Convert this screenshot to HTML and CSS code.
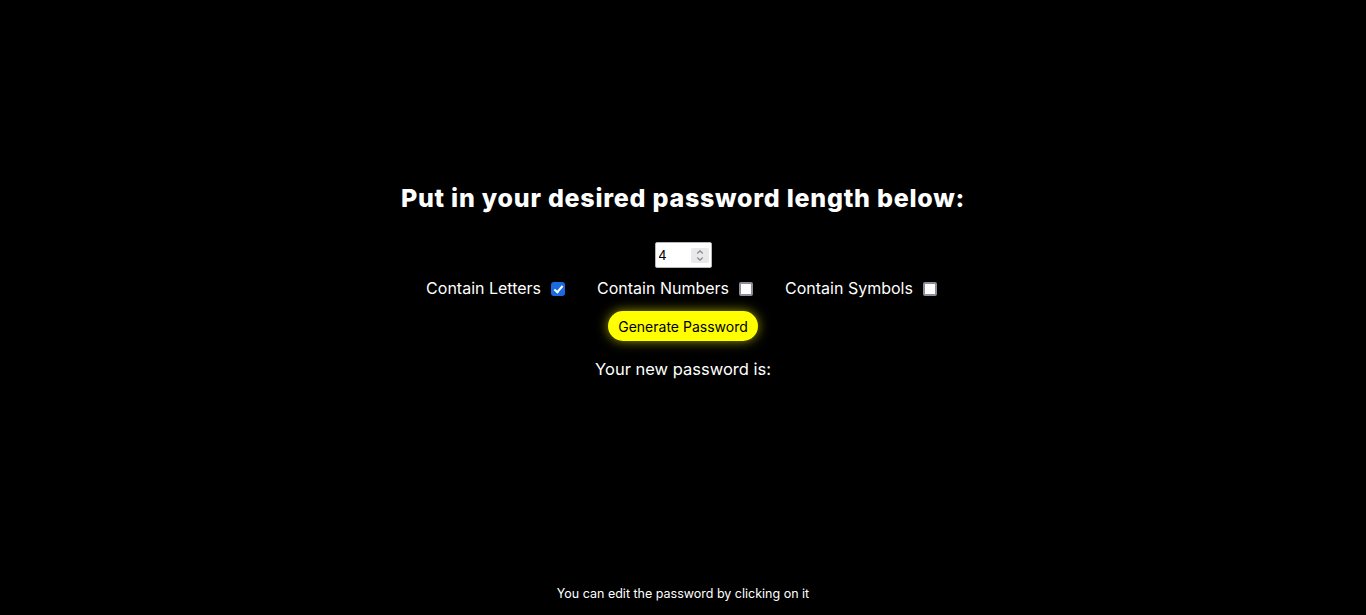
FILE: index.html
```html
<!DOCTYPE html>
<html lang="en">
<head>
<meta charset="utf-8">
<title>Password Generator</title>
<link rel="stylesheet" href="styles.css">
</head>
<body>
<main class="app">
  <h1 class="title">Put in your desired password length below:</h1>
  <div class="length">
    <input class="length-input" type="number" value="4" min="1">
    <span class="spin" aria-hidden="true">
      <svg width="18" height="15" viewBox="0 0 18 15">
        <path d="M6.5 5.2 L9 2.8 L11.5 5.2" fill="none" stroke="#8a8a8f" stroke-width="1.2" stroke-linecap="round" stroke-linejoin="round"/>
        <path d="M6.5 9.8 L9 12.2 L11.5 9.8" fill="none" stroke="#8a8a8f" stroke-width="1.2" stroke-linecap="round" stroke-linejoin="round"/>
      </svg>
    </span>
  </div>
  <div class="options">
    <label class="option">Contain Letters <input class="check" type="checkbox" checked></label>
    <label class="option">Contain Numbers <input class="check" type="checkbox"></label>
    <label class="option">Contain Symbols <input class="check" type="checkbox"></label>
  </div>
  <button class="generate" type="button">Generate Password</button>
  <p class="result">Your new password is:</p>
</main>
<footer class="hint">You can edit the password by clicking on it</footer>
</body>
</html>
```
FILE: styles.css
```css
html, body {
  margin: 0;
  height: 100%;
}
body {
  background: #000;
  color: #fff;
  font-family: "Inter", "Liberation Sans", sans-serif;
  display: flex;
  flex-direction: column;
}
.app {
  flex: 1;
  display: flex;
  flex-direction: column;
  align-items: center;
  padding-top: 182px;
}
.title {
  margin: 0;
  font-size: 25px;
  letter-spacing: 0.75px;
  font-weight: 800;
  line-height: 32px;
}
.length {
  margin-top: 28px;
  width: 57px;
  height: 26px;
  box-sizing: border-box;
  display: flex;
  align-items: center;
  background: #fff;
  border: 1px solid #b8b8bc;
  border-radius: 2px;
  padding: 0 2px 0 3px;
}
.length-input {
  flex: 1;
  min-width: 0;
  border: none;
  outline: none;
  padding: 0;
  background: transparent;
  font-family: "Liberation Sans", sans-serif;
  font-size: 14px;
  color: #000;
  -moz-appearance: textfield;
  appearance: textfield;
}
.length-input::-webkit-inner-spin-button,
.length-input::-webkit-outer-spin-button {
  -webkit-appearance: none;
  margin: 0;
}
.spin {
  display: flex;
  width: 18px;
  height: 15px;
  background: #e9e9ec;
  border-radius: 2px;
}
.options {
  margin-top: 10px;
  display: flex;
  gap: 29px;
  font-size: 16px;
}
.option {
  display: flex;
  align-items: center;
  gap: 6px;
}
.check {
  appearance: none;
  -webkit-appearance: none;
  position: relative;
  box-sizing: border-box;
  width: 14px;
  height: 14px;
  margin: 1px 3px 0 4px;
  background: #fff;
  border: 2px solid #8e8b9b;
  border-radius: 2px;
}
.check:checked {
  background: #1a6be0;
  border-color: #1a6be0;
  border-radius: 3px;
}
.check:checked::after {
  content: "";
  position: absolute;
  left: 3px;
  top: 0px;
  width: 3px;
  height: 7px;
  border: solid #fff;
  border-width: 0 2px 2px 0;
  transform: rotate(40deg);
}
.generate {
  margin-top: 13px;
  height: 30px;
  padding: 0 10px;
  border: none;
  border-radius: 15px;
  background: #ffff00;
  color: #000;
  font-family: inherit;
  font-size: 14px;
  box-shadow: 0 0 12px rgba(255, 255, 0, 0.6);
}
.result {
  margin: 18px 0 0;
  font-size: 16.5px;
}
.hint {
  text-align: center;
  font-size: 12.5px;
  padding-bottom: 14px;
}
```
